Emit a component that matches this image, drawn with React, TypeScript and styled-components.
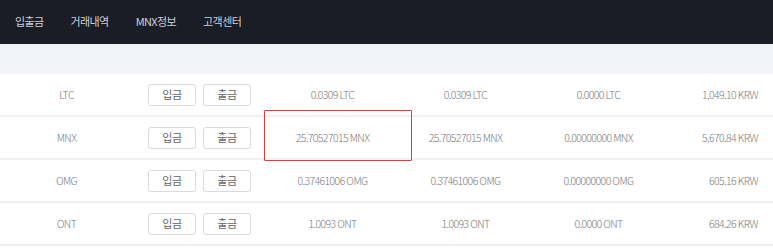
import React from "react";
import styled, { createGlobalStyle } from "styled-components";

const GlobalStyle = createGlobalStyle`
  html, body {
    margin: 0;
    padding: 0;
    background: #ffffff;
    font-family: "Noto Sans CJK KR", "Noto Sans", sans-serif;
  }
`;

const Page = styled.div`
  width: 773px;
  position: relative;
`;

const TopBar = styled.header`
  height: 44px;
  background-color: #1a1c26;
  display: flex;
  align-items: center;
  padding-left: 15px;
  padding-bottom: 2px;
  box-sizing: border-box;
  gap: 27px;
`;

const NavItem = styled.a`
  color: #cdd1d9;
  font-size: 11px;
  letter-spacing: -0.6px;
  text-decoration: none;
  cursor: pointer;
`;

const Band = styled.div`
  height: 30px;
  background-color: #f0f3f7;
`;

const Row = styled.div`
  display: grid;
  grid-template-columns: 133px 133px 133px 133px 133px 1fr;
  align-items: center;
  height: 41px;
  border-bottom: 2px solid #eef0f3;
  font-size: 10.5px;
  font-weight: 300;
  color: #7a7a7a;
  letter-spacing: -0.6px;
`;

const Cell = styled.div<{ $right?: boolean }>`
  text-align: ${(p) => (p.$right ? "right" : "center")};
  padding-right: ${(p) => (p.$right ? "15px" : "0")};
  padding-bottom: 1px;
  white-space: nowrap;
`;

const Buttons = styled.div`
  display: flex;
  justify-content: center;
  gap: 7px;
`;

const SmallButton = styled.button`
  width: 48px;
  height: 22px;
  padding: 0 0 1px;
  background: #fff;
  border: 1px solid #d8dadd;
  border-radius: 3px;
  font-family: inherit;
  font-size: 11px;
  letter-spacing: -0.3px;
  color: #666;
  cursor: pointer;
`;

const Highlight = styled.div`
  position: absolute;
  left: 264px;
  top: 110px;
  width: 146px;
  height: 49px;
  border: 1px solid #e8383d;
  border-radius: 1px;
  pointer-events: none;
`;

const rows = [
  ["LTC", "0.0309 LTC", "0.0309 LTC", "0.0000 LTC", "1,049.10 KRW"],
  ["MNX", "25.70527015 MNX", "25.70527015 MNX", "0.00000000 MNX", "5,670.84 KRW"],
  ["OMG", "0.37461006 OMG", "0.37461006 OMG", "0.00000000 OMG", "605.16 KRW"],
  ["ONT", "1.0093 ONT", "1.0093 ONT", "0.0000 ONT", "684.26 KRW"],
];

export default function App() {
  return (
    <Page>
      <GlobalStyle />
      <TopBar>
        <NavItem>입출금</NavItem>
        <NavItem>거래내역</NavItem>
        <NavItem>MNX정보</NavItem>
        <NavItem>고객센터</NavItem>
      </TopBar>
      <Band />
      {rows.map(([coin, total, avail, locked, krw]) => (
        <Row key={coin}>
          <Cell>{coin}</Cell>
          <Buttons>
            <SmallButton>입금</SmallButton>
            <SmallButton>출금</SmallButton>
          </Buttons>
          <Cell>{total}</Cell>
          <Cell>{avail}</Cell>
          <Cell>{locked}</Cell>
          <Cell $right>{krw}</Cell>
        </Row>
      ))}
      <Highlight />
    </Page>
  );
}
